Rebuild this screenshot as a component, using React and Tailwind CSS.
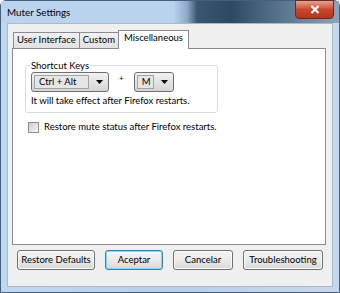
import { useState } from 'react';

const font = { fontFamily: 'Lato, "Liberation Sans", sans-serif' };

const Combo = ({ value, width }) => (
  <div className={`flex h-[20px] ${width} items-stretch rounded-[3px] border border-[#707070] bg-gradient-to-b from-[#f2f2f2] to-[#d5d5d5]`}>
    <div className="m-[2px] flex flex-1 items-center border border-[#a3a3a3] bg-[#e6e6e6] pl-[4px] text-[9.5px] leading-none text-black">
      {value}
    </div>
    <div className="flex w-[17px] items-center justify-center">
      <svg width="7" height="4" viewBox="0 0 7 4">
        <path d="M0 0h7L3.5 4z" fill="#000" />
      </svg>
    </div>
  </div>
);

const Button = ({ children, width, focused }) => (
  <button
    className={`h-[20px] ${width} whitespace-nowrap rounded-[3px] border ${
      focused ? 'border-[#3c7fb1] shadow-[inset_0_0_0_1px_#7fd9f7]' : 'border-[#707070] shadow-[inset_0_0_0_1px_#fbfbfb]'
    } bg-gradient-to-b from-[#f4f4f4] via-[#ebebeb] to-[#d8d8d8] text-[9.5px] leading-none text-black`}
  >
    {children}
  </button>
);

export default function App() {
  const [checked, setChecked] = useState(false);

  return (
    <div className="h-[293px] w-[340px] overflow-hidden bg-white" style={font}>
      <div className="relative flex h-full w-full flex-col rounded-t-[6px] border border-[#44607e] bg-gradient-to-r from-[#c1d7ee] via-[#b8cfe8] to-[#c6d8ec]">
        <div
          className="flex h-[22px] shrink-0 items-center pl-[6px] text-[9.8px] text-black"
          style={{
            background:
              'linear-gradient(to right, #bcd4ee 0%, #b9d2ee 51%, #8fabc8 55%, #3a5670 58%, #2d4862 68%, #3f5b76 74%, #5d7790 84%, #8ea4b8 100%)',
          }}
        >
          Muter Settings
        </div>
        <div className="absolute right-[5px] top-[-1px] flex h-[19px] w-[39px] items-center justify-center rounded-b-[4px] border border-[#6b2a20] bg-gradient-to-b from-[#e5a290] via-[#c9462c] to-[#b8341c]">
          <svg width="10" height="9" viewBox="0 0 10 9">
            <path d="M1.5 1l7 7M8.5 1l-7 7" stroke="#fff" strokeWidth="2.2" />
          </svg>
        </div>
        <div className="mx-[6px] flex flex-1 flex-col border border-[#a9b9cb] bg-[#f0f0f0] px-[4px] pt-[6px]">
          <div className="flex items-end pl-[1px]">
            <div className="flex h-[16px] items-center border border-b-0 border-[#898c95] bg-gradient-to-b from-[#f2f2f2] to-[#e1e1e1] px-[3px] text-[9.5px] text-black">
              User Interface
            </div>
            <div className="flex h-[16px] items-center border border-b-0 border-l-0 border-[#898c95] bg-gradient-to-b from-[#f2f2f2] to-[#e1e1e1] px-[3px] text-[9.5px] text-black">
              Custom
            </div>
            <div className="relative z-10 mb-[-1px] ml-[-1px] flex h-[19px] items-center border border-b-0 border-[#898c95] bg-white px-[5px] pb-[3px] text-[9.5px] text-black">
              Miscellaneous
            </div>
          </div>
          <div className="h-[197px] w-[314px] border border-[#898c95] bg-white pl-[12px] pt-[10px]">
            <fieldset className="w-[193px] rounded-[3px] border border-[#d5dfe5] px-[5px] pb-[4px] pt-0">
              <legend className="ml-[-1px] px-[1px] text-[9.5px] leading-[13px] text-black">Shortcut Keys</legend>
              <div className="flex items-start gap-[10px]">
                <Combo value="Ctrl + Alt" width="w-[78px]" />
                <span className="text-[8px] leading-[12px] text-black">+</span>
                <Combo value="M" width="w-[40px]" />
              </div>
              <div className="mt-[2px] text-[9.5px] leading-[14px] text-black">It will take effect after Firefox restarts.</div>
            </fieldset>
            <label className="mt-[7px] flex items-center gap-[5px] pl-[3px] text-[9.5px] text-black">
              <span
                onClick={() => setChecked(!checked)}
                className="flex h-[11px] w-[11px] items-center justify-center border border-[#8e8f8f] bg-gradient-to-br from-[#cfcfcf] to-[#f6f6f6]"
              >
                {checked && <span className="text-[9px] leading-none">✓</span>}
              </span>
              Restore mute status after Firefox restarts.
            </label>
          </div>
          <div className="flex items-center gap-[10px] pl-[5px] pt-[5px]">
            <Button width="w-[78px]">Restore Defaults</Button>
            <Button width="w-[58px]" focused>
              Aceptar
            </Button>
            <Button width="w-[60px]">Cancelar</Button>
            <Button width="w-[80px]">Troubleshooting</Button>
          </div>
        </div>
        <div className="h-[5px] shrink-0" />
      </div>
    </div>
  );
}
